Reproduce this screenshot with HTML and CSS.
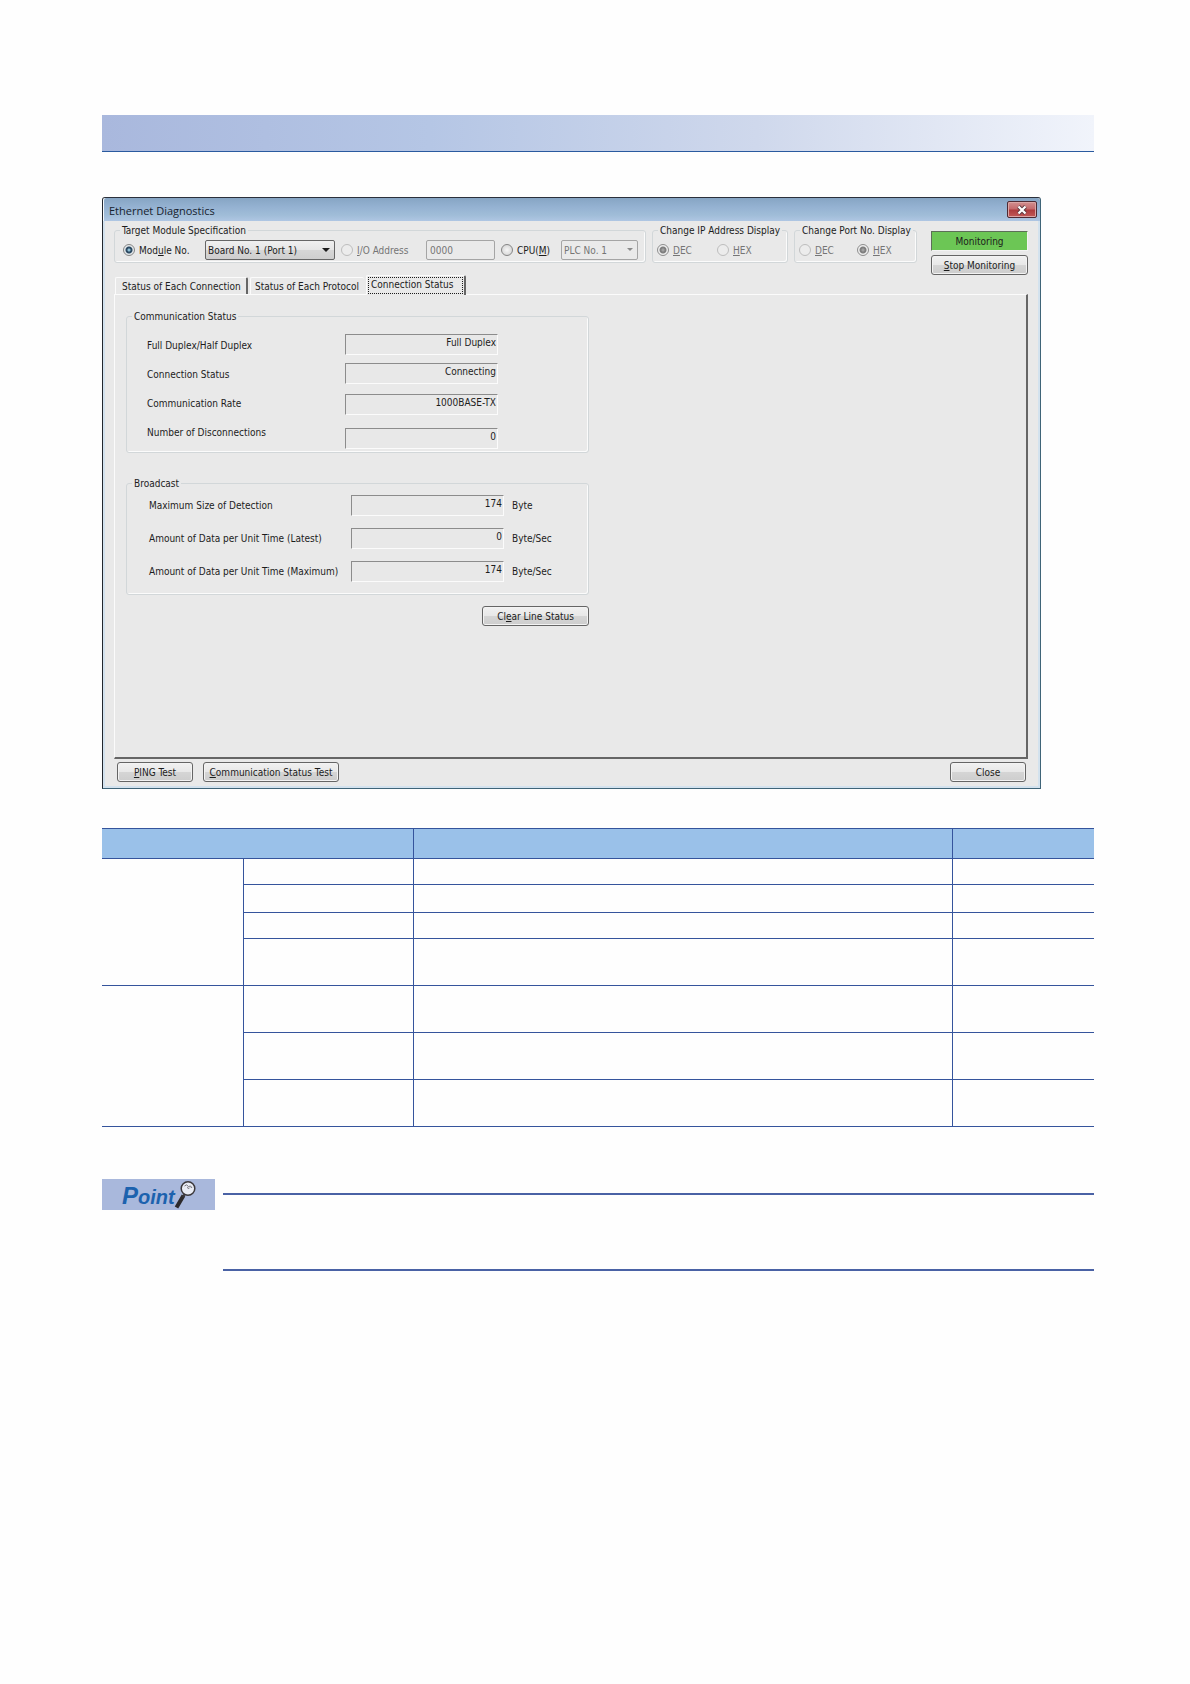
FILE: index.html
```html
<!DOCTYPE html>
<html lang="en">
<head>
<meta charset="utf-8">
<title>Ethernet Diagnostics</title>
<link rel="stylesheet" href="styles.css">
</head>
<body>
<main class="page">
  <div class="banner"></div>

  <section class="dialog" aria-labelledby="dialog-title">
    <header class="titlebar">
      <h1 class="title" id="dialog-title">Ethernet Diagnostics</h1>
      <button class="close-x" type="button" aria-label="Close window">
        <svg width="12" height="10" viewBox="0 0 12 10"><path d="M2.500 1.500 9.500 8.500M9.500 1.500 2.500 8.500" stroke="#5d3a40" stroke-width="4"/><path d="M2.500 1.500 9.500 8.500M9.500 1.500 2.500 8.500" stroke="#fff" stroke-width="2.200"/></svg>
      </button>
    </header>

    <form class="body">
      <div class="settings">
        <fieldset class="group target">
          <legend>Target Module Specification</legend>
          <div class="controls target-controls">
            <label class="choice"><input type="radio" name="target" checked><span>Mod<u>u</u>le No.</span></label>
            <span class="picker"><select aria-label="Module No."><option>Board No. 1 (Port 1)</option></select></span>
            <label class="choice off"><input type="radio" name="target" disabled><span><u>I</u>/O Address</span></label>
            <input class="address" type="text" value="0000" aria-label="I/O Address" disabled>
            <label class="choice"><input type="radio" name="target"><span>CPU(<u>M</u>)</span></label>
            <span class="picker off"><select aria-label="CPU" disabled><option>PLC No. 1</option></select></span>
          </div>
        </fieldset>
        <fieldset class="group ip">
          <legend>Change IP Address Display</legend>
          <div class="controls">
            <label class="choice off"><input type="radio" name="ip" checked disabled><span><u>D</u>EC</span></label>
            <label class="choice off"><input type="radio" name="ip" disabled><span><u>H</u>EX</span></label>
          </div>
        </fieldset>
        <fieldset class="group port">
          <legend>Change Port No. Display</legend>
          <div class="controls">
            <label class="choice off"><input type="radio" name="port" disabled><span><u>D</u>EC</span></label>
            <label class="choice off"><input type="radio" name="port" checked disabled><span><u>H</u>EX</span></label>
          </div>
        </fieldset>
        <div class="monitor">
          <output class="state">Monitoring</output>
          <button class="btn" type="button"><u>S</u>top Monitoring</button>
        </div>
      </div>

      <div class="tabs" role="tablist">
        <button class="tab tab-connection" type="button" role="tab">Status of Each Connection</button>
        <button class="tab tab-protocol" type="button" role="tab">Status of Each Protocol</button>
        <button class="tab tab-status" type="button" role="tab" aria-selected="true"><span class="focus">Connection Status</span></button>
      </div>

      <div class="panel" role="tabpanel">
        <fieldset class="group comm">
          <legend>Communication Status</legend>
          <div class="comm-grid">
            <div class="names">
              <label for="duplex">Full Duplex/Half Duplex</label>
              <label for="connection">Connection Status</label>
              <label for="rate">Communication Rate</label>
              <label for="drops">Number of Disconnections</label>
            </div>
            <div class="values">
              <input class="value" id="duplex" value="Full Duplex" readonly>
              <input class="value" id="connection" value="Connecting" readonly>
              <input class="value" id="rate" value="1000BASE-TX" readonly>
              <input class="value" id="drops" value="0" readonly>
            </div>
          </div>
        </fieldset>
        <fieldset class="group cast">
          <legend>Broadcast</legend>
          <div class="cast-grid">
            <label for="size">Maximum Size of Detection</label>
            <input class="value" id="size" value="174" readonly><span>Byte</span>
            <label for="latest">Amount of Data per Unit Time (Latest)</label>
            <input class="value" id="latest" value="0" readonly><span>Byte/Sec</span>
            <label for="maximum">Amount of Data per Unit Time (Maximum)</label>
            <input class="value" id="maximum" value="174" readonly><span>Byte/Sec</span>
          </div>
        </fieldset>
        <div class="panel-actions"><button class="btn clear" type="button">Cl<u>e</u>ar Line Status</button></div>
      </div>

      <footer class="actions">
        <button class="btn short" type="button"><u>P</u>ING Test</button>
        <button class="btn long" type="button"><u>C</u>ommunication Status Test</button>
        <button class="btn short last" type="button">Close</button>
      </footer>
    </form>
  </section>

  <table class="items">
    <colgroup><col class="c1"><col class="c2"><col><col class="c4"></colgroup>
    <thead><tr><th colspan="2"></th><th></th><th></th></tr></thead>
    <tbody>
      <tr class="low"><td rowspan="4"></td><td></td><td></td><td></td></tr>
      <tr class="mid"><td></td><td></td><td></td></tr>
      <tr class="low"><td></td><td></td><td></td></tr>
      <tr class="tall"><td></td><td></td><td></td></tr>
      <tr class="tall"><td rowspan="3"></td><td></td><td></td><td></td></tr>
      <tr class="tall"><td></td><td></td><td></td></tr>
      <tr class="tall"><td></td><td></td><td></td></tr>
    </tbody>
  </table>

  <aside class="point">
    <h2 class="badge">
      <span class="word"><span class="initial">P</span>oint</span>
      <svg class="lens" width="24" height="30" viewBox="0 0 24 30">
        <path d="M10.500 15.500 3.500 27.500" stroke="#2d2a2c" stroke-width="4"/>
        <path d="M12.500 12.500 10 17" stroke="#3a3739" stroke-width="2"/>
        <circle cx="15" cy="8.500" r="6.800" fill="#e9ecf4" stroke="#3b383b" stroke-width="1.500"/>
        <path d="M11.500 6q2-2.500 4 .5l2-.5 1.500 2M14 7.500l2 1 1-1" fill="none" stroke="#77757c" stroke-width="1"/>
      </svg>
    </h2>
    <div class="note"></div>
  </aside>
</main>
</body>
</html>
```
FILE: styles.css
```css
* { box-sizing: border-box; }

body {
  margin: 0;
  background: #fefefe;
  color: #1c1c1c;
  font: 10px/12px "DejaVu Sans Condensed", "Noto Sans", sans-serif;
}

button, input, select { font: inherit; color: inherit; margin: 0; }
u { text-underline-offset: 1px; }

.page { padding: 115px 96px 64px 102px; }

.banner {
  height: 37px;
  border-bottom: 1px solid #2a5a9f;
  background: linear-gradient(90deg, #a9b8dd, #b5c6e5 33%, #cfd8ec 66%, #f1f4fb);
}

/* Dialog window */
.dialog {
  margin: 45px 53px 0 0;
  border: 1px solid #3f6478;
  border-top-color: #2b303b;
  border-left-color: #23272e;
  border-radius: 3px 3px 0 0;
  background: #e9e9e9;
}

.titlebar {
  display: flex;
  align-items: center;
  justify-content: space-between;
  height: 23px;
  padding: 0 3px 0 5px;
  border-left: 1px solid #f4f8fc;
  border-radius: 3px 3px 0 0;
  background: linear-gradient(#86a5c4, #95b2d2 40%, #a0bdd8 75%, #afc6e3);
}

.title {
  margin: 0;
  padding-top: 2px;
  font: 400 11px/16px "Open Sans", "Noto Sans", sans-serif;
  color: #16222e;
}

.close-x {
  display: flex;
  align-items: center;
  justify-content: center;
  width: 30px;
  height: 17px;
  padding: 0;
  border: 1px solid #4e2a33;
  border-radius: 2px;
  background: linear-gradient(#d29090, #c4686a 48%, #ac3a3c 52%, #c25a58);
  box-shadow: inset 0 0 0 1px #dba5a5;
}

.body {
  padding: 3px 10px 4px 9px;
  border: 2px solid #d3e2ee;
  border-top: 0;
}

/* Group boxes */
.group {
  min-width: 0;
  margin: 0;
  padding: 0;
  border: 1px solid #d2d7d9;
  border-radius: 3px;
  box-shadow: inset -1px -1px #fbfbfb;
}

.group legend { margin-left: 5px; padding: 1px 2px 0; }

.settings { display: flex; align-items: flex-start; gap: 6px; }
.target { width: 532px; }
.ip { width: 136px; }
.port { width: 123px; }

.controls {
  display: flex;
  align-items: center;
  gap: 6px;
  height: 25px;
  padding: 3px 4px 2px;
}

.target-controls {
  display: grid;
  grid-template-columns: 76px 130px 79px 69px 54px 77px;
  padding: 3px 8px 2px;
}

.choice { display: flex; align-items: center; gap: 4px; white-space: nowrap; }
.choice span { padding-top: 1px; }
.ip .choice { width: 54px; }
.port .choice { width: 52px; }
.off { color: #757575; }

.choice input {
  appearance: none;
  flex: none;
  width: 12px;
  height: 12px;
  border: 1px solid #858585;
  border-radius: 50%;
  background: radial-gradient(#f6f6f6, #cfcfcf);
}
.choice input:checked {
  background: radial-gradient(circle, #8fc0d6 0 1px, #2c4a63 2px 3px, #e4e8ea 4px);
}
.choice input:disabled { border-color: #bdbdbd; background: #ececec; }
.choice input:disabled:checked {
  border-color: #8e8e8e;
  background: radial-gradient(circle, #a2a2a2 0 1px, #808080 2px 3px, #efefef 4px);
}

.picker { position: relative; display: flex; height: 20px; }
.picker select {
  appearance: none;
  width: 100%;
  padding: 1px 2px 0;
  border: 1px solid #666;
  border-radius: 2px;
  background: linear-gradient(#f0f0f0, #e6e6e6 48%, #d6d6d6 52%, #cecece);
}
.picker::after {
  content: "";
  position: absolute;
  top: 8px;
  right: 5px;
  border: 4px solid transparent;
  border-top-color: #1c1c1c;
  border-bottom: 0;
  pointer-events: none;
}
.picker.off select { border-color: #a5a5a5; background: #eaeaea; opacity: 1; }
.picker.off::after { border-width: 3px; border-bottom: 0; border-top-color: #8a8a8a; }

.address {
  height: 20px;
  padding: 0 3px;
  border: 1px solid #a5a5a5;
  border-radius: 2px;
  background: #eaeaea;
  color: #757575;
}

.monitor {
  display: flex;
  flex-direction: column;
  gap: 4px;
  width: 97px;
  margin-left: auto;
  padding-top: 7px;
}

.state {
  height: 20px;
  border: 1px solid #f4f4f4;
  border-top-color: #5c6f57;
  border-left-color: #5c6f57;
  background: #6cc655;
  line-height: 20px;
  text-align: center;
}

.btn {
  height: 20px;
  padding: 1px 2px 0;
  border: 1px solid #656565;
  border-radius: 3px;
  background: linear-gradient(#f1f1f1, #e8e8e8 48%, #d5d5d5 52%, #cdcdcd);
  box-shadow: inset 0 0 0 1px #f3f3f3;
  white-space: nowrap;
}

/* Tabs */
.tabs {
  display: flex;
  align-items: flex-end;
  gap: 2px;
  padding-left: 1px;
}

.tab {
  height: 17px;
  padding: 2px 2px 0 6px;
  border: 1px solid #fbfbfb;
  border-bottom: 0;
  border-right: 2px solid #666;
  border-radius: 2px 2px 0 0;
  background: #e9e9e9;
  text-align: left;
  white-space: nowrap;
}
.tab-connection { width: 133px; }
.tab-protocol { width: 114px; padding-left: 4px; border-right: 0; }
.tab-status {
  position: relative;
  width: 100px;
  height: 20px;
  margin-bottom: -1px;
  padding: 1px;
}
.focus { display: block; padding: 1px 0 2px 2px; border: 1px dotted #1c1c1c; }

.panel {
  padding: 15px 11px 131px;
  border: 1px solid #fbfbfb;
  border-right: 2px solid #666;
  border-bottom: 2px solid #666;
}

.comm, .cast, .panel-actions { width: 463px; }
.comm-grid { display: flex; padding: 11px 0 3px 20px; }
.names { display: grid; gap: 7px; align-content: start; width: 198px; padding-top: 1px; line-height: 22px; }
.values { display: grid; grid-template-rows: 29px 31px 34px 21px; width: 153px; }

.value {
  width: 153px;
  height: 21px;
  padding: 0 1px 5px;
  border: 1px solid #fbfbfb;
  border-top-color: #8c8c8c;
  border-left-color: #8c8c8c;
  border-radius: 0;
  background: #e8e8e8;
  text-align: right;
}

.cast { margin-top: 24px; }
.cast-grid {
  display: grid;
  grid-template-columns: 202px 153px 1fr;
  row-gap: 12px;
  padding: 5px 0 12px 22px;
  line-height: 21px;
  white-space: nowrap;
}
.cast-grid span { padding-left: 8px; }

.panel-actions { display: flex; justify-content: flex-end; margin-top: 11px; }
.clear { width: 107px; }

.actions { display: flex; gap: 10px; margin-top: 3px; padding: 0 2px 0 3px; }
.short { width: 76px; }
.long { width: 136px; }
.last { margin-left: auto; }

/* Item table */
.items {
  width: 100%;
  margin-top: 39px;
  border-bottom: 1px solid #35549c;
  border-spacing: 0;
  table-layout: fixed;
}
.c1 { width: 141px; }
.c2 { width: 170px; }
.c4 { width: 142px; }
.items th, .items td {
  padding: 0;
  border-top: 1px solid #35549c;
  border-left: 1px solid #35549c;
}
.items th:first-child, .items td[rowspan] { border-left: 0; }
.items th { height: 30px; background: #9ac1e9; }
.low { height: 26px; }
.mid { height: 28px; }
.tall { height: 47px; }

/* Point note */
.point { display: flex; gap: 8px; margin-top: 52px; }
.badge {
  display: flex;
  align-items: center;
  width: 113px;
  height: 31px;
  margin: 0;
  padding-left: 20px;
  background: #a9b8dc;
  color: #1c62ae;
}
.word { padding-top: 3px; font: italic 700 20px/28px "Liberation Sans", Arial, sans-serif; }
.initial { font-size: 24px; }
.lens { flex: none; margin-left: -2px; }
.note {
  flex: 1;
  height: 78px;
  margin-top: 14px;
  border: solid #4a62a5;
  border-width: 2px 0;
}
```
